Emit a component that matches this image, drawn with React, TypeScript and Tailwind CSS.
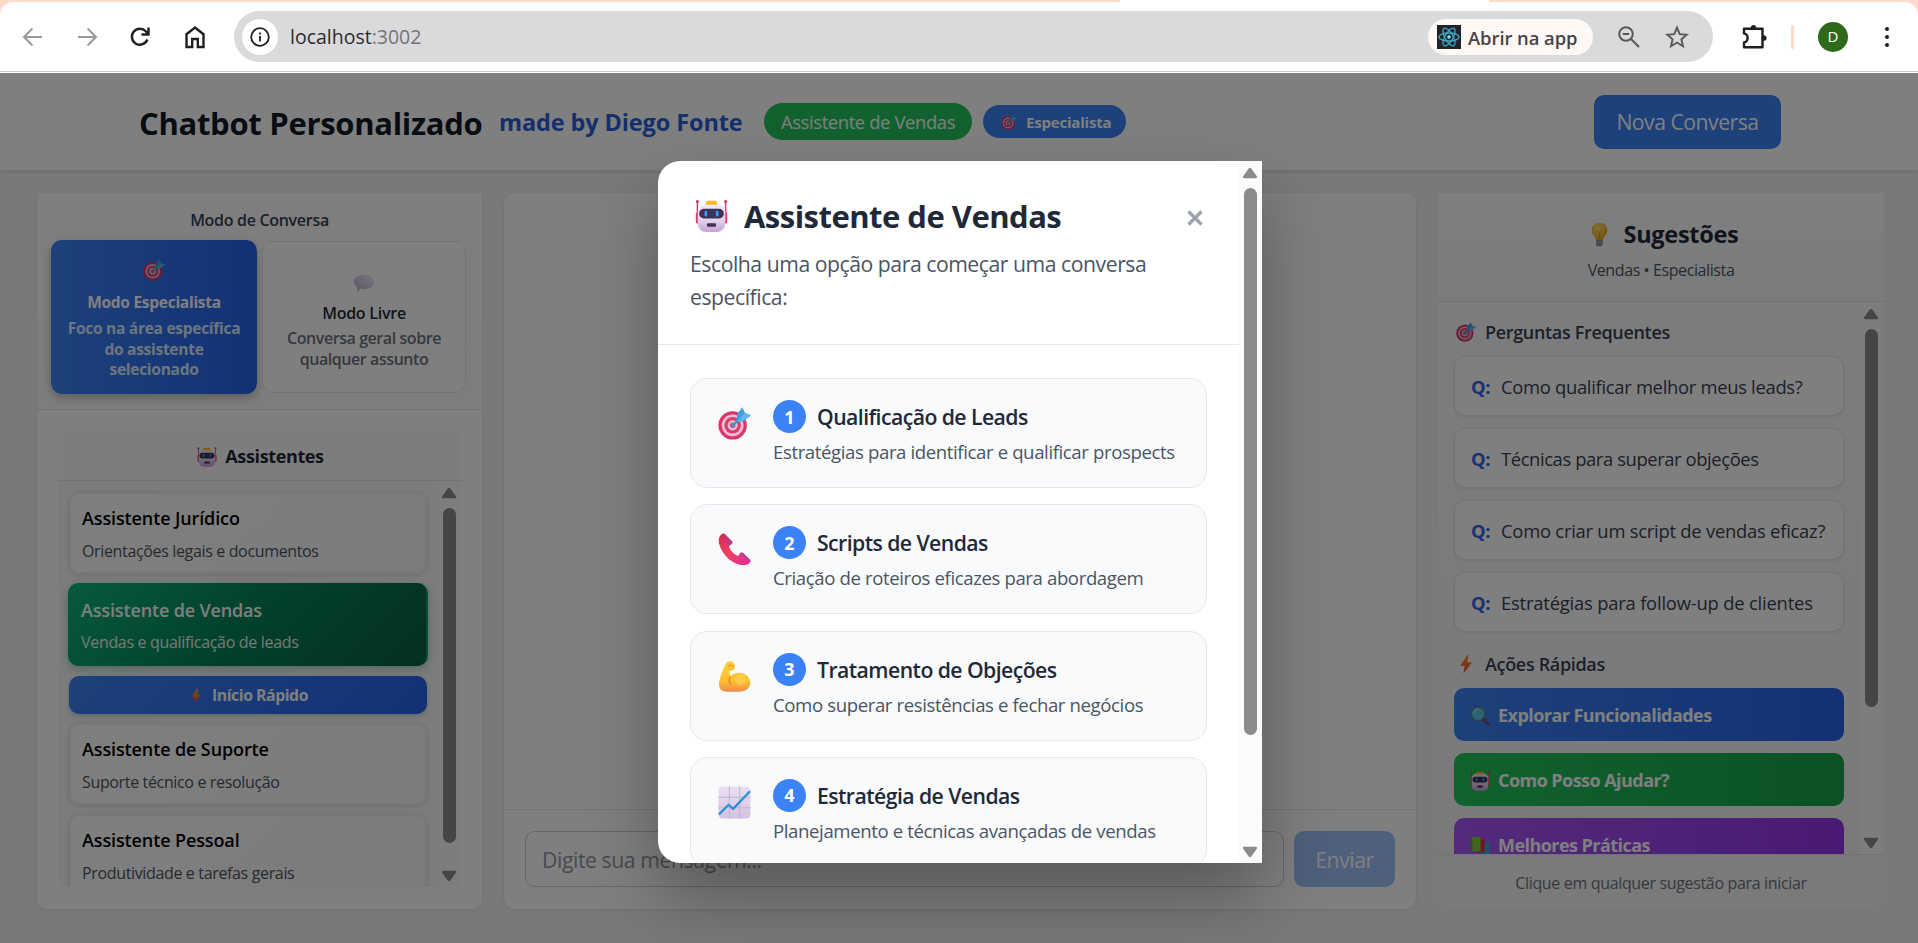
import type { ReactNode } from "react";

type IconProps = { className?: string };

function Robot({ className }: IconProps) {
  return (
    <svg viewBox="0 0 32 32" className={className}>
      <defs>
        <linearGradient id="rb" x1="0" y1="0" x2="0" y2="1">
          <stop offset="0" stopColor="#f3ecf7" />
          <stop offset="0.6" stopColor="#e0d2ec" />
          <stop offset="1" stopColor="#c3a0d9" />
        </linearGradient>
      </defs>
      <rect x="1.6" y="3" width="1.4" height="12" fill="#d83a6f" />
      <rect x="29" y="3" width="1.4" height="12" fill="#f0386b" />
      <circle cx="2.300" cy="2" r="1.500" fill="#d62f5c" />
      <circle cx="29.700" cy="2" r="1.500" fill="#d62f5c" />
      <rect x="0.8" y="12" width="5" height="11.500" rx="2" fill="#d8386f" />
      <rect x="26.2" y="12" width="5" height="11.500" rx="2" fill="#ff2f63" />
      <rect x="2.600" y="4" width="26.800" height="27.500" rx="8.500" fill="url(#rb)" />
      <path d="M10.500 5V3.300c0-1.300.8-2 2-2h7c1.200 0 2 .7 2 2V5z" fill="#fbb92b" />
      <rect x="4" y="9" width="24" height="9.400" rx="4.700" fill="#3d3157" />
      <rect x="9.200" y="10.800" width="2.600" height="5.800" rx="1.300" fill="#25a3ee" />
      <rect x="20.200" y="10.800" width="2.600" height="5.800" rx="1.300" fill="#25a3ee" />
      <rect x="11.600" y="23" width="8.800" height="3.400" rx="1.200" fill="#43304f" />
    </svg>
  );
}

function Target({ className }: IconProps) {
  return (
    <svg viewBox="0 0 32 32" className={className}>
      <circle cx="14.200" cy="17.800" r="13.800" fill="#d8376a" />
      <circle cx="14.200" cy="17.800" r="10.600" fill="#e9bcd8" />
      <circle cx="14.200" cy="17.800" r="8" fill="#dc3d6d" />
      <circle cx="14.200" cy="17.800" r="4.900" fill="#e9bcd8" />
      <circle cx="14.200" cy="17.800" r="2.700" fill="#a9668f" />
      <path d="M14.200 17.800 23 9.500" stroke="#4f8fb8" strokeWidth="2.200" strokeLinecap="round" />
      <path d="M17.500 13.500 19 6.300 23.600.3l2.400 5.200 5.800 2.500-6.200 5.200-5.300 1.700z" fill="#3f9fe0" />
      <path d="M19.500 13 25.800 6l6 2-6.200 5.200-5.300 1.700z" fill="#5db8ef" />
    </svg>
  );
}

function Bubble({ className }: IconProps) {
  return (
    <svg viewBox="0 0 32 32" className={className}>
      <defs>
        <linearGradient id="bub" x1="0" y1="1" x2="1" y2="0">
          <stop offset="0" stopColor="#bba6cc" />
          <stop offset="0.500" stopColor="#dccfe6" />
          <stop offset="1" stopColor="#f4edf8" />
        </linearGradient>
      </defs>
      <path d="M16.500 5C25 5 31 9.600 31 16S25 26.500 17 26.500c-2.600 0-4.600-.2-6.500-1-.8 2-2.300 3.500-4.500 3.500-.8-.2.8-2.600.2-5.400C3 21.800 1 19.200 1 16 1 9.600 8 5 16.500 5z" fill="url(#bub)" />
    </svg>
  );
}

function Bolt({ className }: IconProps) {
  return (
    <svg viewBox="0 0 32 32" className={className}>
      <defs>
        <linearGradient id="blt" x1="0" y1="0" x2="0" y2="1">
          <stop offset="0" stopColor="#ffa23a" />
          <stop offset="1" stopColor="#ef4523" />
        </linearGradient>
      </defs>
      <path d="M18 1 7.500 17.500c-.4.800 0 1.500.800 1.500H14l-2 12 13-16.500c.6-.8.2-1.500-.6-1.500H18.500L20 2c.1-1.200-1.200-2-2-1z" fill="url(#blt)" />
    </svg>
  );
}

function Bulb({ className }: IconProps) {
  return (
    <svg viewBox="0 0 32 32" className={className}>
      <defs>
        <radialGradient id="blb" cx="0.400" cy="0.300" r="0.700">
          <stop offset="0" stopColor="#ffe36b" />
          <stop offset="1" stopColor="#f0a41c" />
        </radialGradient>
      </defs>
      <path d="M16 1C10 1 6 5.200 6 10.700c0 4.200 2.600 6.600 4.300 8.800.8 1.200 1 2.500 1.400 3.500h8.600c.4-1 .6-2.300 1.400-3.500 1.700-2.200 4.300-4.600 4.300-8.800C26 5.200 22 1 16 1z" fill="url(#blb)" />
      <path d="M14 12c1 2 3 2 4 0M16 14v8" stroke="#d98a1a" strokeWidth="1" fill="none" />
      <path d="M11.700 23h8.600v5.500c0 1.500-1 2.500-2.500 2.500h-3.600c-1.500 0-2.500-1-2.500-2.500z" fill="#8f7f92" />
      <path d="M11.700 25.500h8.600M12 28.300h8" stroke="#c6b8c9" strokeWidth="1" />
    </svg>
  );
}

function Magnifier({ className }: IconProps) {
  return (
    <svg viewBox="0 0 32 32" className={className}>
      <path d="m20 20 9 8.500" stroke="#7d3f6d" strokeWidth="4.400" strokeLinecap="round" />
      <circle cx="13" cy="12.500" r="11" fill="#56cbe0" stroke="#66768f" strokeWidth="2.200" />
      <path d="M6.500 10c1-3 3.500-4.500 6-4.500" stroke="#9be6f0" strokeWidth="1.800" fill="none" strokeLinecap="round" />
    </svg>
  );
}

function Books({ className }: IconProps) {
  return (
    <svg viewBox="0 0 32 32" className={className}>
      <rect x="16" y="11" width="15" height="20" rx="2" fill="#3aa4d8" />
      <path d="M10 5h11c1.500 0 2.500 1 2.500 2.500V26H10z" fill="#d5343f" />
      <rect x="1" y="1.500" width="16" height="23" rx="2" fill="#86ca42" />
      <rect x="1" y="1.500" width="3" height="23" rx="1.500" fill="#5b9a30" />
    </svg>
  );
}

function Phone({ className }: IconProps) {
  return (
    <svg viewBox="0 0 32 32" className={className}>
      <defs>
        <linearGradient id="phn" x1="0" y1="0" x2="1" y2="1">
          <stop offset="0" stopColor="#d22c4e" />
          <stop offset="0.500" stopColor="#ef3f63" />
          <stop offset="1" stopColor="#e6289e" />
        </linearGradient>
      </defs>
      <path d="M3.200 1.400C.5 3.500.2 7.500 1.400 11.500c2.900 9 9.500 16.500 19 19 4 1 8.500.8 10.600-2 .7-1 .5-2-.3-2.900l-6.300-6c-1-.9-2.200-.8-3 .1l-2 2.700c-4.600-2-7.500-5.300-9-9.700l2.800-2c.9-.8 1-2 .1-3L7 1.300C6 .3 4.500.4 3.200 1.400z" fill="url(#phn)" />
      <path d="m4.500 1 8.800 6.700c1 1 .8 2.200-.1 3L10.400 12.700C9 8 6 4 4.500 1z" fill="#b63a86" />
      <path d="m21.400 19.700 9.600 8.300c.7-1 .5-1.700-.3-2.500l-6.300-6c-1-.9-2.200-.7-3 .2z" fill="#a8479f" />
    </svg>
  );
}

function Muscle({ className }: IconProps) {
  return (
    <svg viewBox="0 0 32 32" className={className}>
      <defs>
        <linearGradient id="msc" x1="0" y1="0" x2="0" y2="1">
          <stop offset="0" stopColor="#ffcc3e" />
          <stop offset="0.650" stopColor="#ffc02f" />
          <stop offset="1" stopColor="#f08a4d" />
        </linearGradient>
      </defs>
      <path d="M7 4.500C8 2 10 1 12.300 1.200c2.600.3 4.200 2.300 4.200 5 0 2.500-1.800 4.300-4.200 4.300-.6 0-1 .4-1 1l.3 4.300C14 13.500 17 12.300 20.500 12.300c6 0 10.800 4.400 10.800 9.700 0 5-4.300 8.700-11 8.700H9C3.500 30.700 1 28 1 23.700 1 17.500 4.300 11 7 4.500z" fill="url(#msc)" />
      <path d="M12 16.500c-1.600 1.900-1.600 4.500.3 6.800" stroke="#e98b25" strokeWidth="1.600" fill="none" strokeLinecap="round" />
      <path d="M9.800 5.500c1.300-.7 3.500-.5 4.500.6" stroke="#ec9a2c" strokeWidth="1.200" fill="none" strokeLinecap="round" />
      <circle cx="22" cy="19" r="5.500" fill="#ffd75a" opacity="0.500" />
    </svg>
  );
}

function Chart({ className }: IconProps) {
  return (
    <svg viewBox="0 0 32 32" className={className}>
      <defs>
        <linearGradient id="cht" x1="0" y1="0" x2="0" y2="1">
          <stop offset="0" stopColor="#e9e1f2" />
          <stop offset="1" stopColor="#d3c2e1" />
        </linearGradient>
      </defs>
      <rect x="0.500" y="0.500" width="31" height="31" rx="4" fill="url(#cht)" />
      <path d="M11 .5v31M21 .5v31M.5 11h31M.5 21h31" stroke="#c3b2d4" strokeWidth="1" />
      <path d="m1 27.500 9.300-9.300 4.400 4L31 5" stroke="#2f8fd6" strokeWidth="2.200" fill="none" strokeLinejoin="round" />
    </svg>
  );
}

function Arrow({ down = false }: { down?: boolean }) {
  return (
    <svg viewBox="0 0 16 12" className="h-[12px] w-[16px] shrink-0" fill="#8b8b8b">
      {down ? (
        <path d="M2.200.8h11.600c1.200 0 1.700 1 1 1.900l-5.500 7.800c-.7.900-1.900.9-2.600 0L1.200 2.700C.5 1.800 1 .8 2.200.8z" />
      ) : (
        <path d="M2.200 11.200h11.600c1.200 0 1.700-1 1-1.900L9.300 1.500C8.600.6 7.400.6 6.700 1.500L1.200 9.300c-.7.900-.2 1.900 1 1.900z" />
      )}
    </svg>
  );
}

function ScrollBar({ className, thumb }: { className: string; thumb: string }) {
  return (
    <div className={`flex shrink-0 flex-col items-center bg-[#fbfbfb] pt-[6px] pr-px pb-[5px] ${className}`}>
      <Arrow />
      <div className={`w-[13px] rounded-full bg-[#8b8b8b] ${thumb}`} />
      <div className="grow" />
      <Arrow down />
    </div>
  );
}

function BrowserBar() {
  return (
    <div className="h-[73px] shrink-0 bg-[#ffdac8]">
      <div className="flex h-[2px]">
        <div className="w-[1120px]" />
        <div className="w-[369px] bg-white" />
      </div>
      <div className="flex h-[71px] items-center rounded-t-[13px] border-b border-white bg-white">
        <div className="flex h-[70px] w-full items-center border-b border-[#c8cbca]">
          <div className="flex w-[234px] shrink-0 items-center pl-[22px]">
            <svg viewBox="0 0 22 22" className="mr-[32px] h-[22px] w-[22px]" fill="none" stroke="#9a9a9a" strokeWidth="2">
              <path d="M20 11H2.500M10.500 2.500 2 11l8.500 8.500" />
            </svg>
            <svg viewBox="0 0 22 22" className="mr-[31px] h-[22px] w-[22px]" fill="none" stroke="#9a9a9a" strokeWidth="2">
              <path d="M2 11h17.500M11.500 2.500 20 11l-8.500 8.500" />
            </svg>
            <svg viewBox="0 0 22 22" className="mr-[33px] h-[22px] w-[22px]" fill="none" stroke="#1f1f1f" strokeWidth="2.400">
              <path d="M18.400 13.500a8 8 0 1 1-1.600-8.200l2.400 2.400M19.500 1.500v7h-7" />
            </svg>
            <svg viewBox="0 0 22 24" className="h-[24px] w-[22px]" fill="none" stroke="#1f1f1f" strokeWidth="2.400">
              <path d="M2.500 9.200 11 2.500l8.500 6.700V22h-5.700v-8H8.200v8H2.500z" />
            </svg>
          </div>
          <div className="flex h-[51px] w-[1479px] items-center rounded-full bg-[#dadadc] pl-[8px]">
            <div className="flex h-[36px] w-[36px] items-center justify-center rounded-full bg-white">
              <svg viewBox="0 0 20 20" className="h-[20px] w-[20px]" fill="none" stroke="#1f1f1f" strokeWidth="1.800">
                <circle cx="10" cy="10" r="8.800" />
                <path d="M10 9v5.500M10 5.400v2" />
              </svg>
            </div>
            <span className="ml-[12px] text-[19.500px] text-[#2a2a2c]">
              localhost<span className="text-[#747477]">:3002</span>
            </span>
            <div className="ml-auto flex h-[36px] w-[165px] items-center rounded-full bg-[#fff8f5] pl-[9px]">
              <svg viewBox="0 0 24 24" className="h-[24px] w-[24px]" fill="none" stroke="#3fa9c4" strokeWidth="1.300">
                <rect width="24" height="24" fill="#20242a" stroke="none" />
                <ellipse cx="12" cy="12" rx="10" ry="4" />
                <ellipse cx="12" cy="12" rx="10" ry="4" transform="rotate(60 12 12)" />
                <ellipse cx="12" cy="12" rx="10" ry="4" transform="rotate(120 12 12)" />
                <circle cx="12" cy="12" r="1.800" fill="#8fe3f5" stroke="none" />
              </svg>
              <span className="mt-[2px] ml-[7px] text-[18.400px] font-semibold tracking-[-0.050px] text-[#474345]">Abrir na app</span>
            </div>
            <svg viewBox="0 0 24 24" className="ml-[24px] h-[24px] w-[24px]" fill="none" stroke="#58585b" strokeWidth="2">
              <circle cx="9" cy="9" r="6.800" />
              <path d="m14 14 8 8M5.800 9h6.400" />
            </svg>
            <svg viewBox="0 0 24 24" className="mr-[24px] ml-[24px] h-[24px] w-[24px]" fill="none" stroke="#58585b" strokeWidth="1.900">
              <path d="m12 2.600 2.700 6.500 7 .6-5.300 4.600 1.600 6.900-6-3.700-6 3.700 1.600-6.900L2.300 9.700l7-.6z" />
            </svg>
          </div>
          <svg viewBox="0 0 26 26" className="ml-[28px] h-[26px] w-[26px]" fill="none" stroke="#1f1f1f" strokeWidth="2.400" strokeLinejoin="round">
            <path d="M3 4.800h18.500v18.400H3v-4.800c4.800-1 4.800-8 0-9z" />
            <path d="M9.700 4.500a2.800 2.800 0 0 1 5.600 0zM22 11.200a2.800 2.800 0 0 1 0 5.600z" fill="#1f1f1f" stroke="none" />
            <circle cx="12.500" cy="3.300" r="2.400" fill="#1f1f1f" stroke="none" />
            <circle cx="23" cy="14" r="2.600" fill="#1f1f1f" stroke="none" />
          </svg>
          <div className="ml-[24px] h-[24px] w-[3px] rounded-full bg-[#ffd9c7]" />
          <div className="ml-[24px] flex h-[30px] w-[30px] items-center justify-center rounded-full bg-[#2f6a1c] text-[15px] text-white">D</div>
          <div className="ml-[37px] flex flex-col gap-[4px]">
            <i className="h-[4px] w-[4px] rounded-full bg-[#1f1f1f]" />
            <i className="h-[4px] w-[4px] rounded-full bg-[#1f1f1f]" />
            <i className="h-[4px] w-[4px] rounded-full bg-[#1f1f1f]" />
          </div>
        </div>
      </div>
    </div>
  );
}

function Header() {
  return (
    <header className="flex h-[98px] shrink-0 items-center border-b border-[#e5e7eb] bg-white pr-[137px] pl-[139px] whitespace-nowrap shadow-sm">
      <h1 className="mt-[3px] w-[360px] text-[31px] font-bold tracking-[-0.300px] text-[#111827]">Chatbot Personalizado</h1>
      <span className="mt-[2px] w-[265px] text-[23.500px] font-bold tracking-[-0.120px] text-[#2b5fdb]">made by Diego Fonte</span>
      <span className="flex h-[37px] w-[208px] items-center justify-center rounded-full bg-[#22c55e] pt-px text-[18.400px] tracking-[-0.370px] text-white">
        Assistente de Vendas
      </span>
      <span className="ml-[11px] flex h-[33px] w-[143px] items-center rounded-full bg-[#3b82f6] pt-px pl-[18px] text-[15px] font-bold tracking-[-0.200px] text-white">
        <Target className="mr-[9px] h-[16px] w-[16px]" />
        Especialista
      </span>
      <button className="ml-auto h-[54px] w-[187px] rounded-[10px] bg-[#3b82f6] text-[21.200px] tracking-[-0.500px] text-white">Nova Conversa</button>
    </header>
  );
}

function AssistantCard({ title, text, className }: { title: string; text: string; className: string }) {
  return (
    <div
      className={`w-[358px] shrink-0 rounded-[10px] border-2 border-[#eceef2] bg-linear-135 from-white to-[#f6f7fa] pl-[11px] shadow-[0_1px_5px_rgba(0,0,0,0.15)] ${className}`}
    >
      <div className="text-[18px] leading-[26px] font-semibold tracking-[-0.120px] text-black">{title}</div>
      <div className="mt-[8px] text-[16px] leading-[24px] tracking-[-0.350px] text-[#4b5563]">{text}</div>
    </div>
  );
}

function LeftPanel() {
  return (
    <aside className="flex h-[716px] w-[445px] shrink-0 flex-col rounded-b-[11px] bg-white shadow-[0_1px_4px_rgba(0,0,0,0.08)]">
      <div className="h-[217px] shrink-0 border-b border-[#e5e7eb] bg-linear-to-b from-[#fdfdfe] to-[#fbfbfc] px-[14px] pt-[15px]">
        <h3 className="text-center text-[16px] leading-[25px] font-semibold tracking-[-0.300px] text-[#374151]">Modo de Conversa</h3>
        <div className="mt-[7px] flex items-center">
          <div className="flex h-[154px] w-[206px] flex-col items-center rounded-[11px] bg-linear-to-r from-[#3b82f6] to-[#2563eb] pt-[18px] text-center text-[15.500px] font-bold tracking-[-0.270px] text-white shadow-[0_4px_10px_rgba(0,0,0,0.25)]">
            <Target className="h-[24px] w-[22px]" />
            <span className="mt-[9px] leading-[22px]">Modo Especialista</span>
            <span className="mt-[5px] leading-[20.500px] text-[#dbeafe]">
              Foco na área específica
              <br />
              do assistente
              <br />
              selecionado
            </span>
          </div>
          <div className="ml-[5px] flex h-[152px] w-[204px] flex-col items-center rounded-[11px] border border-[#e5e7eb] bg-white pt-[29px] text-center text-[16px] font-semibold text-[#1f2937]">
            <Bubble className="h-[22px] w-[22px]" />
            <span className="mt-[9px] leading-[22px] tracking-[-0.250px]">Modo Livre</span>
            <span className="mt-[4px] leading-[20.500px] tracking-[-0.430px] text-[#6b7280]">
              Conversa geral sobre
              <br />
              qualquer assunto
            </span>
          </div>
        </div>
      </div>
      <div className="mx-[21px] mt-[21px] flex h-[456px] flex-col overflow-hidden">
        <div className="flex h-[50px] shrink-0 items-center justify-center border-b border-[#e5e7eb] bg-[#fafbfc] pt-[2px] pl-[2px] text-[18px] font-bold tracking-[-0.370px] text-[#1f2937]">
          <Robot className="mr-[8px] h-[20px] w-[20px]" />
          Assistentes
        </div>
        <div className="flex h-[406px]">
          <div className="flex w-[380px] flex-col overflow-hidden bg-[#f8f9fa] pt-[11px] pl-[11px]">
            <AssistantCard title="Assistente Jurídico" text="Orientações legais e documentos" className="h-[82px] pt-[11px]" />
            <div className="mt-[9px] -ml-px h-[83px] w-[360px] shrink-0 rounded-[10px] border-r-2 border-[#0f9a6c] bg-linear-135 from-[#0db57d] via-[#058158] to-[#065f46] pt-[14px] pl-[13px] shadow-[0_3px_10px_rgba(16,120,90,0.35)]">
              <div className="text-[18px] leading-[26px] font-semibold tracking-[-0.150px] text-white">Assistente de Vendas</div>
              <div className="mt-[7px] text-[16px] leading-[24px] tracking-[-0.320px] text-[#e7f5ef]">Vendas e qualificação de leads</div>
            </div>
            <div className="mt-[10px] flex h-[38px] w-[358px] shrink-0 items-center justify-center rounded-[10px] bg-linear-135 from-[#3b82f6] to-[#2563eb] pt-[2px] text-[15.800px] font-bold tracking-[-0.450px] text-white shadow-[0_2px_5px_rgba(0,0,0,0.2)]">
              <Bolt className="mr-[8px] h-[16px] w-[16px]" />
              Início Rápido
            </div>
            <AssistantCard title="Assistente de Suporte" text="Suporte técnico e resolução" className="mt-[9px] h-[82px] pt-[11px]" />
            <AssistantCard title="Assistente Pessoal" text="Produtividade e tarefas gerais" className="mt-[9px] h-[82px] pt-[11px]" />
          </div>
          <ScrollBar className="h-[406px] w-[23px]" thumb="mt-[9px] h-[335px]" />
        </div>
      </div>
    </aside>
  );
}

function ChatPanel() {
  return (
    <main className="ml-[22px] flex h-[716px] w-[912px] shrink-0 flex-col rounded-[11px] bg-white shadow-[0_1px_4px_rgba(0,0,0,0.08)]">
      <div className="grow" />
      <div className="flex h-[100px] gap-[10px] border-t border-[#e5e7eb] px-[21px] pt-[21px]">
        <div className="flex h-[56px] w-[759px] items-center rounded-[10px] border border-[#c9cdd3] bg-white pt-px pl-[16px] text-[21.200px] tracking-[-0.420px] text-[#8f96a3]">
          Digite sua mensagem...
        </div>
        <button className="h-[56px] w-[101px] rounded-[10px] bg-[#9dc1fb] pt-px text-[21.200px] tracking-[-0.450px] text-white">Enviar</button>
      </div>
    </main>
  );
}

const questions = [
  { text: "Como qualificar melhor meus leads?", fit: "tracking-[-0.300px]" },
  { text: "Técnicas para superar objeções", fit: "tracking-[-0.400px]" },
  { text: "Como criar um script de vendas eficaz?", fit: "tracking-[-0.240px]" },
  { text: "Estratégias para follow-up de clientes", fit: "tracking-[-0.200px]" },
];

function SectionTitle({ icon, children }: { icon: ReactNode; children: ReactNode }) {
  return (
    <h4 className="flex h-[26px] shrink-0 items-center gap-[9px] pl-[2px] text-[18px] font-semibold tracking-[-0.330px] text-[#374151]">
      {icon}
      {children}
    </h4>
  );
}

function ActionButton({ icon, children, className }: { icon: ReactNode; children: ReactNode; className: string }) {
  return (
    <div
      className={`flex h-[53px] shrink-0 items-center gap-[8px] rounded-[10px] bg-linear-to-r pt-[2px] pl-[16px] text-[18px] font-bold tracking-[-0.550px] text-white ${className}`}
    >
      {icon}
      {children}
    </div>
  );
}

function SuggestionsPanel() {
  return (
    <aside className="ml-[22px] flex h-[716px] w-[446px] shrink-0 flex-col rounded-b-[11px] bg-[#f9fafb] shadow-[0_1px_3px_rgba(0,0,0,0.04)]">
      <div className="flex h-[109px] shrink-0 flex-col items-center border-b border-[#e2e4e8] bg-linear-to-b from-[#fefefe] to-[#f6f7f9] pt-[24px]">
        <h2 className="flex items-center pl-[3px] text-[23.500px] leading-[34px] font-bold tracking-[-0.300px] text-[#1f2937]">
          <Bulb className="mr-[12px] h-[25px] w-[25px]" />
          Sugestões
        </h2>
        <p className="mt-[7px] text-[16px] leading-[24px] tracking-[-0.400px] text-[#4b5563]">Vendas • Especialista</p>
      </div>
      <div className="flex h-[552px] shrink-0">
        <div className="flex w-[421px] flex-col overflow-hidden bg-linear-to-b from-[#f8f9fb] to-[#f4f5f7] pt-[17px] pl-[16px]">
          <SectionTitle icon={<Target className="h-[20px] w-[20px]" />}>Perguntas Frequentes</SectionTitle>
          <div className="mt-[11px] flex w-[390px] flex-col gap-[12px]">
            {questions.map(({ text, fit }) => (
              <div
                key={text}
                className="flex h-[60px] items-center rounded-[11px] border border-[#e5e7eb] bg-white pt-[2px] pl-[16px] text-[18.400px] whitespace-nowrap text-[#374151] shadow-[0_1px_3px_rgba(0,0,0,0.08)]"
              >
                <b className="w-[30px] font-bold tracking-[-0.500px] text-[#3366e6]">Q:</b>
                <span className={fit}>{text}</span>
              </div>
            ))}
          </div>
          <div className="mt-[19px]">
            <SectionTitle icon={<Bolt className="h-[20px] w-[20px]" />}>Ações Rápidas</SectionTitle>
          </div>
          <div className="mt-[11px] flex w-[390px] flex-col gap-[12px]">
            <ActionButton icon={<Magnifier className="h-[20px] w-[20px]" />} className="from-[#3b82f6] to-[#2563eb]">
              Explorar Funcionalidades
            </ActionButton>
            <ActionButton icon={<Robot className="h-[20px] w-[20px]" />} className="from-[#22c55e] to-[#16a34a]">
              Como Posso Ajudar?
            </ActionButton>
            <ActionButton icon={<Books className="h-[20px] w-[20px]" />} className="from-[#a855f7] to-[#9333ea]">
              Melhores Práticas
            </ActionButton>
          </div>
        </div>
        <ScrollBar className="h-[552px] w-[25px]" thumb="mt-[9px] h-[378px]" />
      </div>
      <div className="flex h-[55px] items-center justify-center rounded-b-[11px] border-t border-[#e2e4e8] bg-[#f4f5f6] pt-px text-[16px] tracking-[-0.340px] text-[#6b7280]">
        Clique em qualquer sugestão para iniciar
      </div>
    </aside>
  );
}

const options = [
  { title: "Qualificação de Leads", text: "Estratégias para identificar e qualificar prospects", Icon: Target },
  { title: "Scripts de Vendas", text: "Criação de roteiros eficazes para abordagem", Icon: Phone },
  { title: "Tratamento de Objeções", text: "Como superar resistências e fechar negócios", Icon: Muscle },
  { title: "Estratégia de Vendas", text: "Planejamento e técnicas avançadas de vendas", Icon: Chart },
];

function Modal() {
  return (
    <div className="flex h-[702px] w-[604px] overflow-hidden rounded-l-[22px] bg-white shadow-[0_34px_69px_rgba(0,0,0,0.3)]">
      <div className="flex h-full w-[581px] shrink-0 flex-col overflow-hidden">
        <div className="h-[184px] shrink-0 border-b border-[#e5e7eb] pt-[33px] pl-[32px]">
          <div className="flex h-[44px] items-center pl-[5px]">
            <Robot className="h-[34px] w-[33px]" />
            <h2 className="mt-px ml-[16px] text-[31px] font-bold tracking-[-0.520px] text-[#1f2937]">Assistente de Vendas</h2>
            <svg viewBox="0 0 16 16" className="mt-[4px] mr-[36px] ml-auto h-[16px] w-[16px]" stroke="#9ca3af" strokeWidth="3.200">
              <path d="m1.500 1.500 13 13M14.500 1.500l-13 13" />
            </svg>
          </div>
          <p className="mt-[9px] text-[21.200px] leading-[33px] tracking-[-0.460px] text-[#4b5563]">
            Escolha uma opção para começar uma conversa
            <br />
            específica:
          </p>
        </div>
        <div className="flex flex-col gap-[16.300px] pt-[33px] pl-[32px]">
          {options.map(({ title, text, Icon }, i) => (
            <div key={title} className="flex h-[110px] w-[517px] shrink-0 rounded-[17px] border border-[#e5e7eb] bg-[#f9fafb] pt-[21px] pl-[27px]">
              <Icon className="mt-[7px] h-[33px] w-[33px] shrink-0" />
              <div className="ml-[22px]">
                <div className="flex h-[33px] items-center">
                  <span className="flex h-[33px] w-[33px] items-center justify-center rounded-full bg-[#3b82f6] pt-px text-[18px] font-bold text-white">{i + 1}</span>
                  <span className="mt-px ml-[11px] text-[21.200px] font-semibold tracking-[-0.550px] text-[#1f2937]">{title}</span>
                </div>
                <p className="mt-[5px] text-[18.600px] leading-[28px] tracking-[-0.390px] whitespace-nowrap text-[#4b5563]">{text}</p>
              </div>
            </div>
          ))}
        </div>
      </div>
      <ScrollBar className="h-full w-[23px]" thumb="mt-[9px] h-[547px]" />
    </div>
  );
}

export default function App() {
  return (
    <div className="flex h-[943px] w-[1918px] flex-col overflow-hidden bg-white font-['Open_Sans','Noto_Sans',sans-serif]">
      <BrowserBar />
      <div className="relative flex h-[870px] flex-col overflow-hidden bg-[#f2f3f5]">
        <Header />
        <div className="flex pt-[22px] pl-[37px]">
          <LeftPanel />
          <ChatPanel />
          <SuggestionsPanel />
        </div>
        <div className="absolute inset-0 flex items-start justify-center bg-black/50 pt-[88px] pl-[2px]">
          <Modal />
        </div>
      </div>
    </div>
  );
}
